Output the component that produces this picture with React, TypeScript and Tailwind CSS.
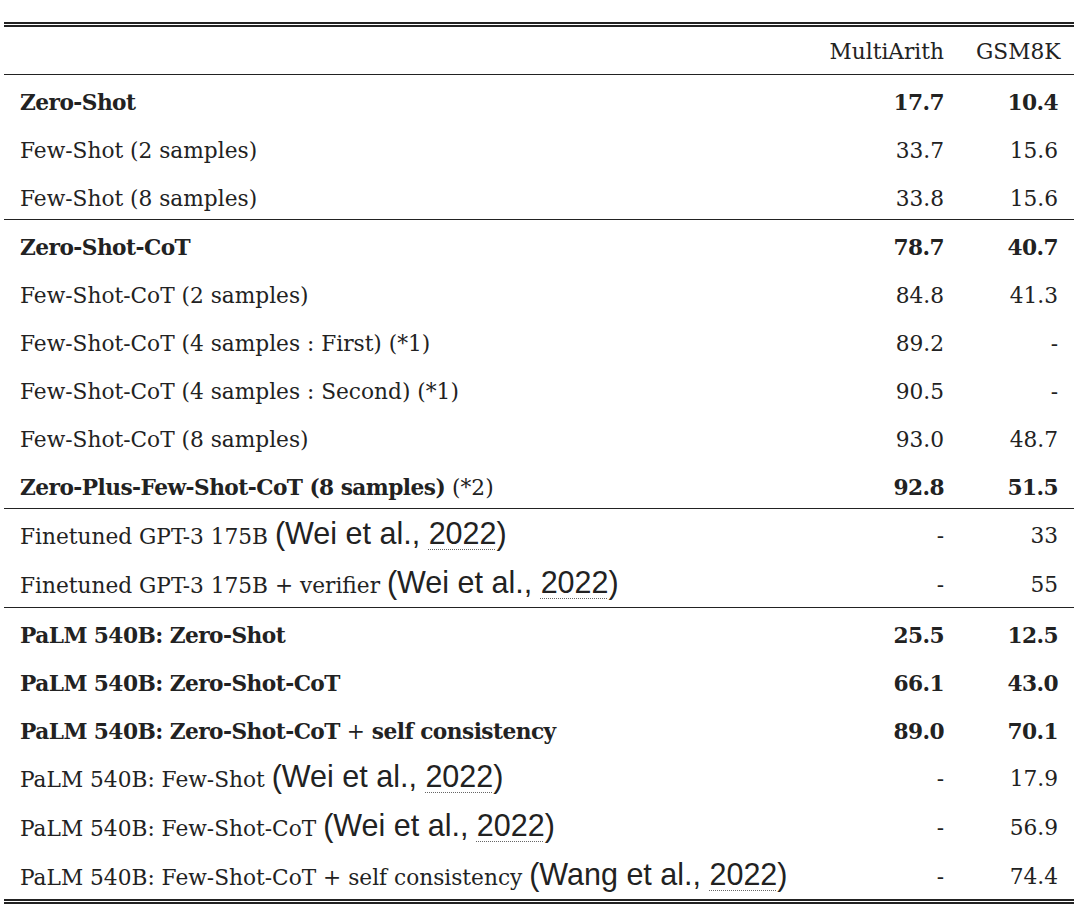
import React from 'react';

type Row = {
  label: React.ReactNode;
  a: string;
  b: string;
  bold?: boolean;
  cite?: string;
};

const Cite: React.FC<{ name: string }> = ({ name }) => (
  <span className="font-['Liberation_Sans',Arial,sans-serif] text-[30.5px] leading-none font-normal">
    ({name} et al.,{' '}
    <span className="underline decoration-dotted decoration-1 underline-offset-[5px] decoration-[#666]">2022</span>)
  </span>
);

const B: React.FC<{ children: React.ReactNode }> = ({ children }) => (
  <b className="font-bold tracking-[-0.55px]">{children}</b>
);

const groups: Row[][] = [
  [
    { label: <B>Zero-Shot</B>, a: '17.7', b: '10.4', bold: true },
    { label: 'Few-Shot (2 samples)', a: '33.7', b: '15.6' },
    { label: 'Few-Shot (8 samples)', a: '33.8', b: '15.6' },
  ],
  [
    { label: <B>Zero-Shot-CoT</B>, a: '78.7', b: '40.7', bold: true },
    { label: 'Few-Shot-CoT (2 samples)', a: '84.8', b: '41.3' },
    { label: 'Few-Shot-CoT (4 samples : First) (*1)', a: '89.2', b: '-' },
    { label: 'Few-Shot-CoT (4 samples : Second) (*1)', a: '90.5', b: '-' },
    { label: 'Few-Shot-CoT (8 samples)', a: '93.0', b: '48.7' },
    {
      label: (
        <>
          <B>Zero-Plus-Few-Shot-CoT (8 samples)</B> (*2)
        </>
      ),
      a: '92.8',
      b: '51.5',
      bold: true,
    },
  ],
  [
    { label: 'Finetuned GPT-3 175B', a: '-', b: '33', cite: 'Wei' },
    { label: 'Finetuned GPT-3 175B + verifier', a: '-', b: '55', cite: 'Wei' },
  ],
  [
    { label: <B>PaLM 540B: Zero-Shot</B>, a: '25.5', b: '12.5', bold: true },
    { label: <B>PaLM 540B: Zero-Shot-CoT</B>, a: '66.1', b: '43.0', bold: true },
    {
      label: (
        <>
          <B>PaLM 540B: Zero-Shot-CoT</B> + <B>self consistency</B>
        </>
      ),
      a: '89.0',
      b: '70.1',
      bold: true,
    },
    { label: 'PaLM 540B: Few-Shot', a: '-', b: '17.9', cite: 'Wei' },
    { label: 'PaLM 540B: Few-Shot-CoT', a: '-', b: '56.9', cite: 'Wei' },
    { label: 'PaLM 540B: Few-Shot-CoT + self consistency', a: '-', b: '74.4', cite: 'Wang' },
  ],
];

const cols = 'grid grid-cols-[minmax(0,1fr)_151px_114px] items-center';

const App: React.FC = () => {
  return (
    <div className="min-h-screen bg-white px-[4px] pt-[22px] font-['DejaVu_Serif',serif] text-[21.7px] text-[#222]">
      <div className="border-y-[5px] border-double border-[#222]">
        {/* Header */}
        <div className={`${cols} h-[48px] border-b border-[#222] pt-[3px]`}>
          <div />
          <div className="px-4 text-right">MultiArith</div>
          <div className="px-4 text-right">GSM8K</div>
        </div>

        {groups.map((rows, gi) => (
          <div key={gi} className={gi < groups.length - 1 ? 'border-b border-[#222]' : ''}>
            {rows.map((r, ri) => (
              <div
                key={ri}
                className={`${cols} ${r.cite ? 'h-[49px] pt-[5px]' : 'h-[48px] pt-[9px]'} whitespace-nowrap`}
              >
                <div className="px-4">
                  {r.label}
                  {r.cite && (
                    <>
                      {' '}
                      <Cite name={r.cite} />
                    </>
                  )}
                </div>
                <div className={`px-4 text-right ${r.bold ? 'font-bold tracking-[-0.55px]' : ''}`}>{r.a}</div>
                <div className={`px-4 text-right ${r.bold ? 'font-bold tracking-[-0.55px]' : ''}`}>{r.b}</div>
              </div>
            ))}
          </div>
        ))}
      </div>
    </div>
  );
};

export default App;
